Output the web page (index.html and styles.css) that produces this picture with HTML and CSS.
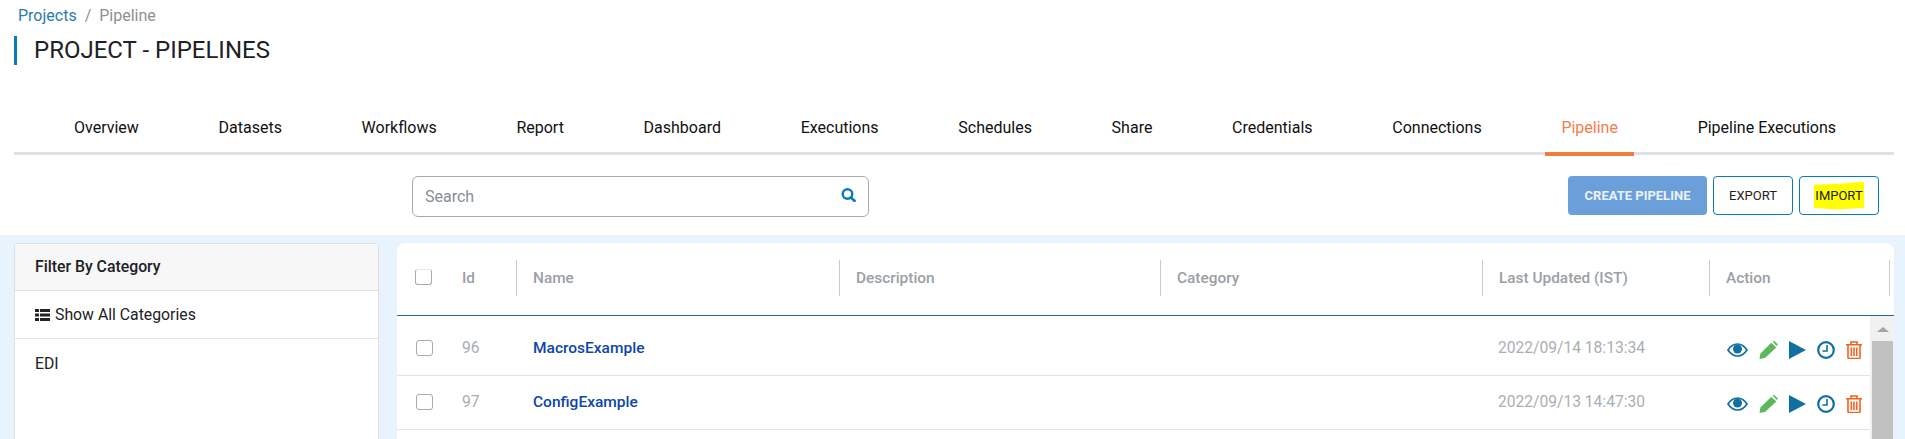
FILE: index.html
```html
<!DOCTYPE html>
<html lang="en">
<head>
<meta charset="UTF-8">
<meta name="viewport" content="width=device-width, initial-scale=1.0">
<title>Project - Pipelines</title>
<link rel="stylesheet" href="styles.css">
</head>
<body>
    <nav class="breadcrumb">
        <a href="#">Projects</a>
        <span class="crumb-sep">/</span>
        <span class="crumb-current">Pipeline</span>
    </nav>
    <h1 class="page-title">PROJECT - PIPELINES</h1>

    <ul class="tabs">
        <li class="tab">Overview</li>
        <li class="tab">Datasets</li>
        <li class="tab">Workflows</li>
        <li class="tab">Report</li>
        <li class="tab">Dashboard</li>
        <li class="tab">Executions</li>
        <li class="tab">Schedules</li>
        <li class="tab">Share</li>
        <li class="tab">Credentials</li>
        <li class="tab">Connections</li>
        <li class="tab active">Pipeline</li>
        <li class="tab">Pipeline Executions</li>
    </ul>

    <div class="toolbar">
        <div class="search">
            <input type="text" class="search-input" placeholder="Search">
            <svg class="search-icon" viewBox="0 0 15 14" width="15" height="14">
                <circle cx="6.500" cy="6" r="4.800" fill="none" stroke="#0b7ab8" stroke-width="2.400"/>
                <path d="M9.800 9.500l3.700 3.300" stroke="#0b7ab8" stroke-width="2.800" stroke-linecap="round"/>
            </svg>
        </div>
        <div class="actions">
            <button class="btn btn-primary">CREATE PIPELINE</button>
            <button class="btn btn-outline">EXPORT</button>
            <button class="btn btn-outline"><span class="marker">IMPORT</span></button>
        </div>
    </div>

    <main class="content">
        <aside class="filter">
            <div class="filter-head">Filter By Category</div>
            <div class="filter-row">
                <svg class="list-icon" viewBox="0 0 15 12" width="15" height="12">
                    <path d="M0 0h4v3H0zM5 0h10v3H5zM0 4.500h4v3H0zM5 4.500h10v3H5zM0 9h4v3H0zM5 9h10v3H5z" fill="#222"/>
                </svg>
                Show All Categories
            </div>
            <div class="filter-row plain">EDI</div>
        </aside>

        <section class="table-card">
            <div class="grid-row table-head">
                <div class="cell"><span class="checkbox"></span></div>
                <div class="cell">Id</div>
                <div class="cell"><span class="th-label">Name</span></div>
                <div class="cell"><span class="th-label">Description</span></div>
                <div class="cell"><span class="th-label">Category</span></div>
                <div class="cell"><span class="th-label">Last Updated (IST)</span></div>
                <div class="cell"><span class="th-label th-last">Action</span></div>
            </div>
            <div class="table-body">
                <div class="rows">
                    <div class="grid-row table-row">
                        <div class="cell"><span class="checkbox"></span></div>
                        <div class="cell muted">96</div>
                        <div class="cell name"><a href="#">MacrosExample</a></div>
                        <div class="cell"></div>
                        <div class="cell"></div>
                        <div class="cell muted date">2022/09/14 18:13:34</div>
                        <div class="cell icons">
                            <svg class="icon" viewBox="0 0 21 14" width="21" height="14"><path d="M1 7C3.600 3 6.800 1 10.500 1s6.900 2 9.500 6c-2.600 4-5.800 6-9.500 6S3.600 11 1 7z" fill="none" stroke="#10709f" stroke-width="1.700"/><circle cx="10.500" cy="6" r="4.500" fill="#10709f"/></svg>
                            <svg class="icon" viewBox="0 0 19 18" width="19" height="18"><path d="M13.500.6l1.800-.6 3.400 3.300-.6 1.900zM12.300 1.700l5 4.700L6 17l-5.500 1 .9-5.500z" fill="#5cb85c"/></svg>
                            <svg class="icon" viewBox="0 0 17 18" width="17" height="18"><path d="M0 0l17 9L0 18z" fill="#10709f"/></svg>
                            <svg class="icon" viewBox="0 0 18 18" width="18" height="18"><circle cx="9" cy="9" r="7.800" fill="none" stroke="#10709f" stroke-width="2.200"/><path d="M10 4v6H5.500" fill="none" stroke="#10709f" stroke-width="1.600"/></svg>
                            <svg class="icon" viewBox="0 0 16 18" width="16" height="18"><path d="M5 3.500V1h6v2.500M0 3.700h16M2 4v12.500a1 1 0 0 0 1 1h10a1 1 0 0 0 1-1V4M5.300 6.500v8.500M8 6.500v8.500M10.700 6.500v8.500" fill="none" stroke="#f4621f" stroke-width="1.600"/></svg>
                        </div>
                    </div>
                    <div class="grid-row table-row">
                        <div class="cell"><span class="checkbox"></span></div>
                        <div class="cell muted">97</div>
                        <div class="cell name"><a href="#">ConfigExample</a></div>
                        <div class="cell"></div>
                        <div class="cell"></div>
                        <div class="cell muted date">2022/09/13 14:47:30</div>
                        <div class="cell icons">
                            <svg class="icon" viewBox="0 0 21 14" width="21" height="14"><path d="M1 7C3.600 3 6.800 1 10.500 1s6.900 2 9.500 6c-2.600 4-5.800 6-9.500 6S3.600 11 1 7z" fill="none" stroke="#10709f" stroke-width="1.700"/><circle cx="10.500" cy="6" r="4.500" fill="#10709f"/></svg>
                            <svg class="icon" viewBox="0 0 19 18" width="19" height="18"><path d="M13.500.6l1.800-.6 3.400 3.300-.6 1.900zM12.300 1.700l5 4.700L6 17l-5.500 1 .9-5.500z" fill="#5cb85c"/></svg>
                            <svg class="icon" viewBox="0 0 17 18" width="17" height="18"><path d="M0 0l17 9L0 18z" fill="#10709f"/></svg>
                            <svg class="icon" viewBox="0 0 18 18" width="18" height="18"><circle cx="9" cy="9" r="7.800" fill="none" stroke="#10709f" stroke-width="2.200"/><path d="M10 4v6H5.500" fill="none" stroke="#10709f" stroke-width="1.600"/></svg>
                            <svg class="icon" viewBox="0 0 16 18" width="16" height="18"><path d="M5 3.500V1h6v2.500M0 3.700h16M2 4v12.500a1 1 0 0 0 1 1h10a1 1 0 0 0 1-1V4M5.300 6.500v8.500M8 6.500v8.500M10.700 6.500v8.500" fill="none" stroke="#f4621f" stroke-width="1.600"/></svg>
                        </div>
                    </div>
                </div>
                <div class="scrollbar">
                    <div class="scroll-up"><span class="scroll-arrow"></span></div>
                    <div class="scroll-thumb"></div>
                </div>
            </div>
        </section>
    </main>
</body>
</html>
```

FILE: styles.css
```css
* {
    box-sizing: border-box;
}
html, body {
    height: 100%;
}
body {
    margin: 0;
    display: flex;
    flex-direction: column;
    overflow: hidden;
    font-family: Roboto, "Liberation Sans", sans-serif;
    font-size: 16px;
    color: #212529;
    background-color: #fff;
}
a {
    text-decoration: none;
}
.breadcrumb {
    height: 28px;
    padding: 5px 18px 0;
    line-height: 22px;
    color: #8a9096;
}
.breadcrumb a {
    color: #2a7ca8;
}
.crumb-sep {
    margin: 0 4px;
}
.page-title {
    margin: 8px 0 0 14px;
    padding-left: 17px;
    height: 29px;
    line-height: 29px;
    border-left: 3px solid #0b7ab8;
    font-size: 24px;
    font-weight: 400;
    color: #1c2126;
}
.tabs {
    display: flex;
    gap: 47.7px;
    height: 51px;
    margin: 39px 11px 0 14px;
    padding: 0 44px;
    list-style-type: none;
    border-bottom: 3px solid #dee2e6;
}
.tab {
    height: 52px;
    padding: 0 16px;
    line-height: 48px;
    color: #111;
    white-space: nowrap;
}
.tab.active {
    color: #f47c4c;
    border-bottom: 4px solid #f07c3e;
}
.toolbar {
    display: flex;
    align-items: flex-start;
    height: 80px;
    padding: 21px 26px 0 412px;
}
.search {
    display: flex;
    align-items: center;
    width: 457px;
    height: 41px;
    padding: 0 12px;
    border: 1px solid #aaa;
    border-radius: 6px;
}
.search-input {
    flex: 1;
    min-width: 0;
    padding: 0;
    border: none;
    outline: none;
    font: inherit;
}
.search-input::placeholder {
    color: #868e96;
}
.search-icon {
    margin-top: -4px;
}
.actions {
    display: flex;
    gap: 6px;
    margin-left: auto;
}
.btn {
    height: 39px;
    padding: 0;
    border-radius: 4px;
    font-family: inherit;
    font-size: 13px;
}
.btn-primary {
    width: 139px;
    border: none;
    font-weight: 700;
    color: #eaf2fb;
    background-color: #6b9fd9;
}
.btn-outline {
    width: 80px;
    color: #1c2126;
    background-color: #fff;
    border: 1px solid #0b7ab8;
}
.marker {
    display: inline-block;
    padding: 7px 0;
    width: 50px;
    line-height: 14px;
    background-color: #ffff00;
    clip-path: polygon(0 12%, 60% 7%, 100% 0, 100% 94%, 45% 100%, 0 94%);
}
.content {
    flex: 1;
    min-height: 0;
    display: grid;
    grid-template-columns: 365px 1fr;
    gap: 18px;
    padding: 8px 11px 0 14px;
    background-color: #e9f3fd;
}
.filter {
    font-size: 15.8px;
    background-color: #fff;
    border: 1px solid #dcdfe3;
    border-bottom: none;
    border-radius: 4px 4px 0 0;
}
.filter-head {
    height: 47px;
    padding: 0 20px;
    line-height: 46px;
    font-weight: 500;
    color: #1c2126;
    background-color: #f7f7f7;
    border-bottom: 1px solid #dcdfe3;
}
.filter-row {
    display: flex;
    align-items: center;
    gap: 5px;
    height: 48px;
    padding: 0 20px;
    color: #1c2126;
    border-bottom: 1px solid #e2e4e7;
}
.filter-row.plain {
    border-bottom: none;
}
.table-card {
    display: flex;
    flex-direction: column;
    min-height: 0;
    background-color: #fff;
    border-radius: 8px 8px 0 0;
    overflow: hidden;
}
.grid-row {
    display: grid;
    grid-template-columns: 65px 54px 323px 321px 322px 227px 1fr;
    align-items: center;
}
.table-head {
    flex: none;
    height: 73px;
    padding-bottom: 3px;
    font-size: 15.4px;
    font-weight: 500;
    color: #9a9fa6;
    border-bottom: 1px solid #1a6a94;
}
.table-head .checkbox {
    margin: -2px 0 0 -1px;
    border-top-color: #e6e6e6;
}
.cell {
    min-width: 0;
}
.cell:first-child {
    padding-left: 19px;
}
.th-label {
    display: block;
    height: 36px;
    padding-left: 16px;
    line-height: 36px;
    border-left: 1px solid #ccc;
}
.th-last {
    border-right: 1px solid #ccc;
    margin-right: 4px;
}
.checkbox {
    display: block;
    width: 17px;
    height: 16px;
    border: 1px solid #aaa;
    border-radius: 3px;
}
.table-body {
    flex: 1;
    min-height: 0;
    display: flex;
}
.rows {
    flex: 1;
    padding-top: 6px;
}
.table-row {
    height: 54px;
    padding-bottom: 2px;
    border-bottom: 1px solid #e2e4e7;
}
.muted {
    font-size: 15.6px;
    color: #aaaeb3;
}
.name {
    padding-left: 17px;
    font-size: 15.5px;
    font-weight: 500;
}
.name a {
    color: #0d47a8;
}
.date {
    padding-left: 16px;
}
.icons {
    display: flex;
    align-items: center;
    gap: 11px;
    padding: 4px 0 0 18px;
}
.icon {
    flex: none;
}
.scrollbar {
    flex: none;
    display: flex;
    flex-direction: column;
    width: 24px;
    padding-right: 1px;
    background-color: #f1f1f1;
}
.scroll-up {
    height: 25px;
    padding: 11px 0 0 3px;
}
.scroll-arrow {
    display: block;
    width: 0;
    margin: 0 auto;
    border-left: 6px solid transparent;
    border-right: 6px solid transparent;
    border-bottom: 5px solid #a3a3a3;
}
.scroll-thumb {
    flex: 1;
    margin-left: 2px;
    background-color: #c1c1c1;
}
```
